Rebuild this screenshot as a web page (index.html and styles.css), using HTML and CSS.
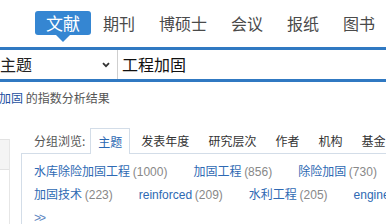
FILE: index.html
```html
<!DOCTYPE html>
<html lang="zh-CN">
<head>
<meta charset="utf-8">
<title>文献检索</title>
<link rel="stylesheet" href="styles.css">
</head>
<body>
<nav class="nav">
  <span class="nav-item active">文献</span>
  <span class="nav-item">期刊</span>
  <span class="nav-item">博硕士</span>
  <span class="nav-item">会议</span>
  <span class="nav-item">报纸</span>
  <span class="nav-item">图书</span>
</nav>
<div class="search">
  <div class="field-select">
    <span class="select-text">主题</span>
    <svg class="chevron" width="8" height="6" viewBox="0 0 8 6"><path d="M1 1.2 L4 4.2 L7 1.2" fill="none" stroke="#333" stroke-width="1.8"/></svg>
  </div>
  <div class="field-input">工程加固</div>
</div>
<div class="result-line"><span class="kw">加固</span> 的指数分析结果</div>
<div class="main">
  <aside class="side">
    <div class="side-head"></div>
  </aside>
  <section class="group">
    <div class="group-tabs">
      <span class="group-label">分组浏览:</span>
      <span class="gtab active">主题</span>
      <span class="gtab">发表年度</span>
      <span class="gtab">研究层次</span>
      <span class="gtab">作者</span>
      <span class="gtab">机构</span>
      <span class="gtab">基金</span>
    </div>
    <div class="group-box">
      <div class="row">
        <span class="item"><a class="lbl">水库除险加固工程</a> <span class="cnt">(1000)</span></span>
        <span class="item"><a class="lbl">加固工程</a> <span class="cnt">(856)</span></span>
        <span class="item"><a class="lbl">除险加固</a> <span class="cnt">(730)</span></span>
      </div>
      <div class="row">
        <span class="item"><a class="lbl">加固技术</a> <span class="cnt">(223)</span></span>
        <span class="item"><a class="lbl">reinforced</a> <span class="cnt">(209)</span></span>
        <span class="item"><a class="lbl">水利工程</a> <span class="cnt">(205)</span></span>
        <span class="item"><a class="lbl">engineering</a> <span class="cnt">(198)</span></span>
      </div>
      <div class="row"><span class="more">&gt;&gt;</span></div>
    </div>
  </section>
</div>
</body>
</html>
```

FILE: styles.css
```css
html, body {
  margin: 0;
  padding: 0;
  background: #fff;
  width: 386px;
  height: 224px;
  overflow: hidden;
}
body {
  font-family: "Noto Sans CJK SC", "Liberation Sans", sans-serif;
  color: #333;
}
.nav {
  display: flex;
  height: 47px;
  box-sizing: border-box;
  padding: 11px 0 0 35px;
  white-space: nowrap;
}
.nav-item {
  position: relative;
  font-size: 16px;
  line-height: 24px;
  height: 24px;
  padding: 0 12px;
  color: #4a4a4a;
}
.nav-item.active {
  background: #3586d2;
  color: #fff;
  border-radius: 3px;
  font-size: 17px;
  padding: 0 11px;
}
.nav-item.active::after {
  content: "";
  position: absolute;
  left: 50%;
  top: 24px;
  margin-left: -7px;
  border-left: 7px solid transparent;
  border-right: 7px solid transparent;
  border-top: 7px solid #3586d2;
}
.search {
  display: flex;
  height: 29px;
  border-top: 3px solid #3079c2;
  border-bottom: 3px solid #3079c2;
  width: 420px;
}
.field-select {
  display: flex;
  align-items: center;
  justify-content: space-between;
  border-right: 1px solid #cfcfcf;
  box-sizing: border-box;
  width: 118px;
  padding-right: 7px;
}
.select-text {
  font-size: 16px;
  color: #222;
  line-height: 29px;
}
.chevron {
  display: block;
  margin-top: 1px;
}
.field-input {
  font-size: 16px;
  line-height: 29px;
  color: #111;
  padding-left: 4px;
}
.result-line {
  font-size: 12px;
  line-height: 20px;
  margin-top: 6px;
  margin-left: -1px;
  color: #555;
  white-space: nowrap;
}
.kw {
  color: #1d4f9f;
}
.main {
  display: flex;
  margin-top: 20px;
}
.side {
  width: 9px;
  margin-top: 11px;
  border-top: 1px solid #e2e2e2;
  border-right: 1px solid #e6e6e6;
  height: 120px;
  margin-right: 11px;
}
.side-head {
  height: 29px;
  background: #f4f4f4;
  border-bottom: 1px solid #e2e2e2;
}
.group {
  flex: 1;
  min-width: 0;
  white-space: nowrap;
}
.group-tabs {
  display: flex;
  align-items: flex-end;
  height: 25px;
  padding-left: 13px;
  font-size: 12px;
}
.group-label {
  line-height: 24px;
  color: #555;
  margin-right: 5px;
}
.gtab {
  line-height: 24px;
  height: 24px;
  padding: 0 7px;
  border: 1px solid transparent;
  border-bottom: none;
  margin-right: 3px;
  color: #333;
}
.gtab.active {
  border-color: #d3dde8;
  background: #fff;
  color: #2a68b2;
  position: relative;
  height: 25px;
  margin-bottom: -1px;
  line-height: 26px;
}
.group-box {
  border-top: 1px solid #d3dde8;
  border-left: 1px solid #d3dde8;
  padding: 5px 0 0 12px;
  height: 80px;
  font-size: 12px;
}
.row {
  display: flex;
  gap: 26px;
  line-height: 23px;
  height: 23px;
}
.lbl {
  color: #2e69b3;
  text-decoration: none;
  font-family: "Liberation Sans", "Noto Sans CJK SC", sans-serif;
}
.cnt {
  color: #888;
  font-family: "Liberation Sans", sans-serif;
}
.more {
  color: #5e84bf;
  font-family: "Liberation Sans", sans-serif;
  letter-spacing: -2px;
  line-height: 26px;
}
```
